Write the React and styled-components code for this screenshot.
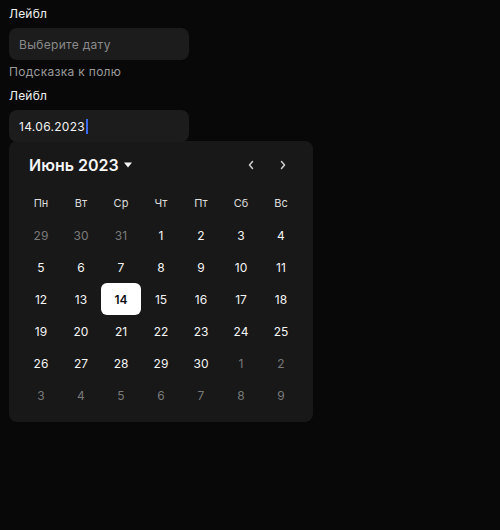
import React from 'react';
import styled, { createGlobalStyle } from 'styled-components';

const GlobalStyle = createGlobalStyle`
    html, body {
        margin: 0;
        padding: 0;
        background: #080808;
    }
    body {
        font-family: Inter, "Noto Sans", sans-serif;
        color: #f2f2f2;
    }
`;

const Page = styled.div`
    min-height: 530px;
    padding: 6px 9px;
    box-sizing: border-box;
`;

const Field = styled.div`
    display: flex;
    flex-direction: column;
    width: 180px;
`;

const Label = styled.div`
    font-size: 12px;
    line-height: 16px;
    color: #f0f0f0;
    margin-bottom: 6px;
    letter-spacing: 0.2px;
`;

const Input = styled.div`
    height: 32px;
    border-radius: 8px;
    background: #1c1c1c;
    display: flex;
    align-items: center;
    padding: 0 10px;
    font-size: 12px;
    color: ${(p) => (p.$placeholder ? '#8a8a8a' : '#f2f2f2')};
    letter-spacing: 0.3px;
`;

const Caret = styled.span`
    display: inline-block;
    width: 2px;
    height: 15px;
    background: #3b6cf0;
    margin-left: 1px;
`;

const Hint = styled.div`
    font-size: 12px;
    line-height: 16px;
    color: #9a9a9a;
    margin: 4px 0 8px;
    letter-spacing: 0.3px;
`;

const Picker = styled.div`
    width: 304px;
    margin-top: -1px;
    background: #181818;
    border-radius: 8px;
    padding: 8px 12px 11px;
    box-sizing: border-box;
`;

const Header = styled.div`
    height: 32px;
    display: flex;
    align-items: center;
    justify-content: space-between;
    padding: 0 8px;
    margin-bottom: 6px;
`;

const Title = styled.div`
    display: flex;
    align-items: center;
    gap: 4px;
    font-size: 16px;
    font-weight: 600;
    color: #f5f5f5;
`;

const Nav = styled.div`
    display: flex;
    gap: 12px;
`;

const NavButton = styled.button`
    width: 20px;
    height: 20px;
    border: none;
    background: transparent;
    padding: 0;
    display: flex;
    align-items: center;
    justify-content: center;
    cursor: pointer;
`;

const Grid = styled.div`
    display: grid;
    grid-template-columns: repeat(7, 40px);
    grid-auto-rows: 32px;
`;

const WeekDay = styled.div`
    display: flex;
    align-items: center;
    justify-content: center;
    font-size: 11px;
    color: #dcdcdc;
`;

const Day = styled.div`
    display: flex;
    align-items: center;
    justify-content: center;
    font-size: 12px;
    border-radius: 6px;
    color: ${(p) => (p.$selected ? '#111' : p.$muted ? '#7a7a7a' : '#f5f5f5')};
    background: ${(p) => (p.$selected ? '#fff' : 'transparent')};
    font-weight: ${(p) => (p.$selected ? 600 : 400)};
`;

const weekDays = ['Пн', 'Вт', 'Ср', 'Чт', 'Пт', 'Сб', 'Вс'];

const days = [
    ...[29, 30, 31].map((d) => ({ d, muted: true })),
    ...Array.from({ length: 30 }, (_, i) => ({ d: i + 1 })),
    ...Array.from({ length: 9 }, (_, i) => ({ d: i + 1, muted: true })),
];

const Chevron = ({ dir }) => (
    <svg width="8" height="10" viewBox="0 0 8 10" fill="none">
        <path
            d={dir === 'left' ? 'M5.5 1.5L2.5 5l3 3.5' : 'M2.5 1.5L5.5 5l-3 3.5'}
            stroke="#d0d0d0"
            strokeWidth="1.5"
            strokeLinecap="round"
            strokeLinejoin="round"
        />
    </svg>
);

const App = () => {
    return (
        <>
            <GlobalStyle />
            <Page>
                <Field>
                    <Label>Лейбл</Label>
                    <Input $placeholder>Выберите дату</Input>
                    <Hint>Подсказка к полю</Hint>
                </Field>
                <Field>
                    <Label>Лейбл</Label>
                    <Input>
                        14.06.2023
                        <Caret />
                    </Input>
                </Field>
                <Picker>
                    <Header>
                        <Title>
                            Июнь 2023
                            <svg width="10" height="6" viewBox="0 0 10 6">
                                <path d="M1 0.5h8L5 5.5z" fill="#f5f5f5" />
                            </svg>
                        </Title>
                        <Nav>
                            <NavButton>
                                <Chevron dir="left" />
                            </NavButton>
                            <NavButton>
                                <Chevron dir="right" />
                            </NavButton>
                        </Nav>
                    </Header>
                    <Grid>
                        {weekDays.map((w) => (
                            <WeekDay key={w}>{w}</WeekDay>
                        ))}
                        {days.map((item, i) => (
                            <Day
                                key={i}
                                $muted={item.muted}
                                $selected={!item.muted && item.d === 14}
                            >
                                {item.d}
                            </Day>
                        ))}
                    </Grid>
                </Picker>
            </Page>
        </>
    );
};

export default App;
